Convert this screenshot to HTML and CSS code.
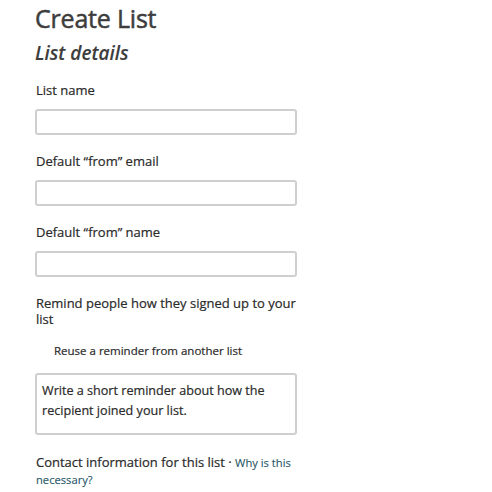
FILE: index.html
```html
<!DOCTYPE html>
<html>
<head>
<meta charset="utf-8">
<link rel="stylesheet" href="styles.css">
</head>
<body>
<div class="page">
  <h1 class="title">Create List</h1>
  <h2 class="subtitle">List details</h2>
  <div class="field first">
    <label class="label">List name</label>
    <div class="input"></div>
  </div>
  <div class="field">
    <label class="label">Default “from” email</label>
    <div class="input"></div>
  </div>
  <div class="field">
    <label class="label">Default “from” name</label>
    <div class="input"></div>
  </div>
  <div class="field">
    <label class="label">Remind people how they signed up to your list</label>
    <div class="reuse">Reuse a reminder from another list</div>
    <div class="textarea">Write a short reminder about how the recipient joined your list.</div>
  </div>
  <div class="contact">Contact information for this list · <a class="link">Why is this necessary?</a></div>
</div>
</body>
</html>
```
FILE: styles.css
```css
html, body { margin: 0; padding: 0; background: #fff; }
body { font-family: "Open Sans", sans-serif; color: #2a2a2a; -webkit-text-stroke: 0.2px currentColor; }
.page { width: 262px; padding: 0 0 0 35px; }
.title { margin: 0; padding-top: 2px; font-size: 25px; font-weight: 400; color: #3d3d3d; line-height: 32px; letter-spacing: -0.2px; -webkit-text-stroke: 0.5px currentColor; }
.subtitle { margin: 6px 0 0; font-size: 19px; font-style: italic; font-weight: 600; color: #3d3d3d; line-height: 26px; -webkit-text-stroke: 0.1px currentColor; }
.field { margin-top: 18px; }
.field.first { margin-top: 16px; }
.label { display: block; font-size: 13px; line-height: 16px; padding-left: 1px; }
.input { margin-top: 11px; height: 22px; border: 2px solid #cfcfcf; border-radius: 3px; }
.reuse { margin: 16px 0 0 19px; font-size: 11.5px; line-height: 16px; }
.textarea { margin-top: 14px; height: 45px; border: 2px solid #cfcfcf; border-radius: 3px; padding: 6px 8px 7px 5px; font-size: 12.6px; line-height: 20px; }
.contact { margin-top: 19px; font-size: 13px; line-height: 16px; padding-left: 1px; }
.link { color: #1e5566; font-size: 11.2px; text-decoration: none; -webkit-text-stroke: 0.1px currentColor; }
```
